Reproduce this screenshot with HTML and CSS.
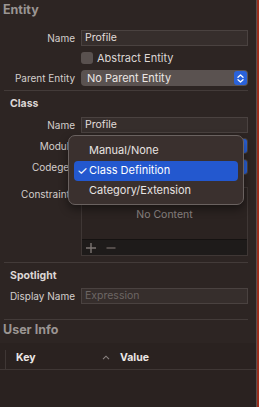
FILE: index.html
```html
<!DOCTYPE html>
<html lang="en">
<head>
    <meta charset="UTF-8"/>
    <title>Entity Inspector</title>
    <link rel="stylesheet" href="styles.css">
</head>
<body>
<div class="window">
    <div class="inspector">

        <section class="group">
            <h2 class="group-title">Entity</h2>
            <div class="form form-entity">
                <span class="label">Name</span>
                <div class="field">Profile</div>

                <span class="label"></span>
                <div class="check"><span class="box"></span>Abstract Entity</div>

                <span class="label">Parent Entity</span>
                <div class="popup">
                    No Parent Entity
                    <span class="stepper">
                        <svg width="7" height="9" viewBox="0 0 7 9">
                            <path d="M1 3.2 L3.5 1 L6 3.2 M1 5.8 L3.5 8 L6 5.8" fill="none" stroke="#fff" stroke-width="1.3" stroke-linecap="round" stroke-linejoin="round"/>
                        </svg>
                    </span>
                </div>
            </div>
        </section>

        <hr class="sep">

        <section class="group group-class">
            <h3 class="sub-title">Class</h3>
            <div class="form form-class">
                <span class="label">Name</span>
                <div class="field">Profile</div>

                <span class="label">Module</span>
                <div class="popup dim"><span class="stepper"></span></div>

                <span class="label">Codegen</span>
                <div class="popup dim"><span class="stepper"></span></div>

                <span class="label label-top">Constraints</span>
                <div class="list-box">
                    <div class="list-empty">No Content</div>
                    <div class="list-bar">
                        <svg width="12" height="12" viewBox="0 0 12 12">
                            <path d="M6 1 V11 M1 6 H11" stroke="#7c7573" stroke-width="1.4"/>
                        </svg>
                        <svg width="12" height="12" viewBox="0 0 12 12">
                            <path d="M1.5 6 H10.5" stroke="#5f5856" stroke-width="1.6"/>
                        </svg>
                    </div>
                </div>
            </div>

            <!-- open codegen menu -->
            <div class="menu">
                <div class="menu-item">Manual/None</div>
                <div class="menu-item selected"><span class="tick">✓</span>Class Definition</div>
                <div class="menu-item">Category/Extension</div>
            </div>
        </section>

        <hr class="sep">

        <section class="group group-spot">
            <h3 class="sub-title">Spotlight</h3>
            <div class="form form-spot">
                <span class="label">Display Name</span>
                <div class="field placeholder">Expression</div>
            </div>
        </section>

        <hr class="sep sep-user">

        <section class="group">
            <h2 class="group-title">User Info</h2>
        </section>

        <div class="table">
            <div class="table-head">
                <span class="col-key">Key</span>
                <span class="caret">
                    <svg width="8" height="5" viewBox="0 0 8 5">
                        <path d="M1 4.2 L4 1.2 L7 4.2" fill="none" stroke="#8a8381" stroke-width="1.1"/>
                    </svg>
                </span>
                <span class="col-value">Value</span>
            </div>
        </div>

    </div>
    <div class="edge"></div>
</div>
</body>
</html>
```

FILE: styles.css
```css
* {
    box-sizing: border-box;
}

body {
    margin: 0;
    padding: 0;
    background-color: #2d2523;
    font-family: Inter, "Liberation Sans", sans-serif;
    font-size: 10px;
    color: #ddd8d6;
}

.window {
    display: flex;
    width: 259px;
    height: 407px;
    overflow: hidden;
}

.inspector {
    width: 256px;
    display: flex;
    flex-direction: column;
    background-color: #2d2523;
}

.edge {
    width: 3px;
    border-left: 1px solid #575050;
    background-color: #9a2d1b;
}

.group {
    padding-right: 8px;
}

.group-title {
    margin: 0;
    padding-left: 3px;
    height: 20px;
    line-height: 20px;
    font-size: 12.5px;
    font-weight: 700;
    color: #9b9593;
}

.sub-title {
    margin: 0;
    padding-left: 10px;
    height: 16px;
    line-height: 16px;
    font-size: 10.5px;
    font-weight: 700;
    color: #dcd7d5;
}

.group-class,
.group-spot {
    padding-top: 5px;
}

.form {
    display: grid;
    grid-template-columns: 75px 1fr;
    column-gap: 6px;
    row-gap: 4px;
    grid-auto-rows: 16px;
}

.form-entity {
    margin-top: 10px;
}

.form-class {
    margin-top: 5px;
    row-gap: 5px;
    grid-template-rows: 16px 16px 16px 76px;
}

.form-spot {
    margin-top: 4px;
}

.label {
    text-align: right;
    line-height: 16px;
    color: #d4cfcd;
    white-space: nowrap;
}

.label-top {
    margin-top: 7px;
    line-height: 14px;
}

.field {
    height: 16px;
    line-height: 14px;
    padding-left: 3px;
    background-color: #362e2c;
    border: 1px solid #4a4240;
    font-size: 10.5px;
    color: #e2dddb;
}

.field.placeholder {
    color: #6d6664;
}

.check {
    display: flex;
    align-items: center;
    gap: 4px;
    font-size: 11px;
    color: #dcd7d5;
}

.box {
    width: 12px;
    height: 12px;
    border-radius: 3px;
    background-color: #59514f;
}

.popup {
    position: relative;
    height: 16px;
    line-height: 16px;
    padding-left: 6px;
    border-radius: 4px;
    background-color: #5a5250;
    font-size: 11px;
    color: #ebe6e4;
}

.popup.dim {
    background-color: #4a4240;
}

.stepper {
    position: absolute;
    right: 1px;
    top: 1px;
    width: 13px;
    height: 14px;
    border-radius: 3px;
    background-color: #2a62da;
    display: flex;
    align-items: center;
    justify-content: center;
}

.list-box {
    margin-top: 7px;
    height: 69px;
    display: flex;
    flex-direction: column;
    border: 1px solid #3f3735;
    background-color: #2b2321;
}

.list-empty {
    flex: 1;
    padding-top: 20px;
    text-align: center;
    font-size: 10.5px;
    color: #8c8583;
}

.list-bar {
    height: 16px;
    display: flex;
    align-items: center;
    gap: 8px;
    padding-left: 3px;
    background-color: #1e1b1a;
    border-top: 1px solid #151211;
}

.group-class {
    position: relative;
}

.menu {
    position: absolute;
    left: 68px;
    top: 44px;
    width: 176px;
    height: 70px;
    padding: 5px;
    border-radius: 7px;
    border: 1px solid #6a6260;
    background-color: #3a302e;
    box-shadow: 0 4px 10px rgba(0, 0, 0, 0.45);
    z-index: 2;
}

.menu-item {
    position: relative;
    height: 20px;
    line-height: 19px;
    padding-left: 15px;
    border-radius: 4px;
    font-size: 11px;
    color: #e8e3e1;
}

.menu-item.selected {
    background-color: #2358cf;
    color: #ffffff;
}

.tick {
    position: absolute;
    left: 3px;
    font-size: 12px;
}

.sep {
    margin: 4px 8px 0 4px;
    border: none;
    height: 1px;
    background-color: #433b39;
}

.group-class + .sep {
    margin-top: 6px;
}

.sep-user {
    margin-top: 15px;
}

.table {
    flex: 1;
    margin-top: 3px;
    background-color: #2a2220;
}

.table-head {
    position: relative;
    display: flex;
    align-items: center;
    height: 27px;
    padding-top: 3px;
    border-bottom: 1px solid #3f3735;
    font-size: 10.5px;
    font-weight: 700;
    color: #ece7e5;
}

.table-head::before {
    content: "";
    position: absolute;
    left: 5px;
    top: 7px;
    bottom: 0;
    width: 1px;
    background-color: #3f3735;
}

.col-key {
    margin-left: 16px;
    width: 86px;
}

.caret {
    width: 18px;
    display: flex;
}
```
